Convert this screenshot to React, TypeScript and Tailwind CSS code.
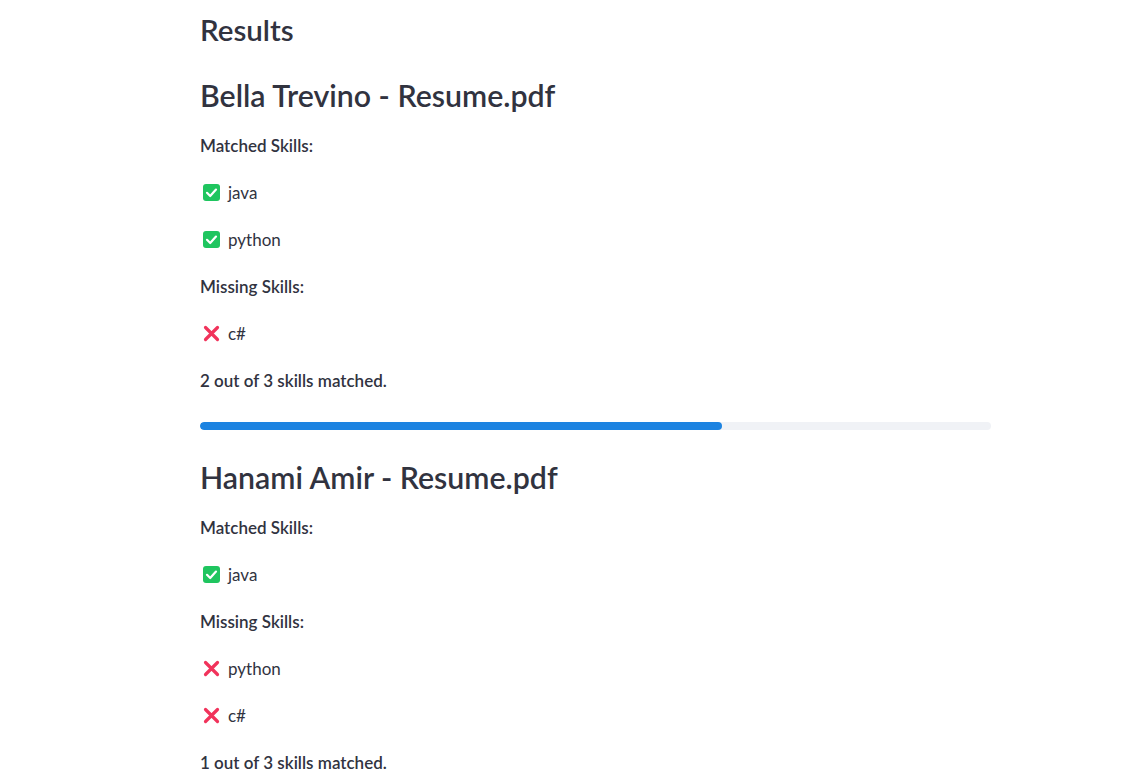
import React from 'react';

type Result = {
  name: string;
  matched: string[];
  missing: string[];
};

const results: Result[] = [
  { name: 'Bella Trevino - Resume.pdf', matched: ['java', 'python'], missing: ['c#'] },
  { name: 'Hanami Amir - Resume.pdf', matched: ['java'], missing: ['python', 'c#'] },
];

function CheckIcon() {
  return (
    <svg width="17" height="17" viewBox="0 0 17 17" className="shrink-0">
      <rect x="0" y="0" width="17" height="17" rx="3" fill="#1fc55f" />
      <path d="M4 8.8 L7.2 12 L13 5.6" stroke="#fff" strokeWidth="2.2" fill="none" strokeLinecap="round" strokeLinejoin="round" />
    </svg>
  );
}

function CrossIcon() {
  return (
    <svg width="17" height="17" viewBox="0 0 17 17" className="shrink-0">
      <path d="M2.5 2.5 L14.5 14.5 M14.5 2.5 L2.5 14.5" stroke="#f1335b" strokeWidth="3.2" strokeLinecap="round" />
    </svg>
  );
}

function Row({ children }: { children: React.ReactNode }) {
  return <div className="h-[47px] flex items-center">{children}</div>;
}

function Skill({ label, ok }: { label: string; ok: boolean }) {
  return (
    <Row>
      <div className="flex items-center gap-2 pl-[3px]">
        {ok ? <CheckIcon /> : <CrossIcon />}
        <span className="text-[17px]">{label}</span>
      </div>
    </Row>
  );
}

function ResultBlock({ r, showBar }: { r: Result; showBar: boolean }) {
  const total = r.matched.length + r.missing.length;
  const pct = Math.floor((r.matched.length / total) * 100);
  return (
    <div>
      <div className="h-[60px] pt-[8px] flex items-center">
        <h2 className="text-[30.3px] font-semibold">{r.name}</h2>
      </div>
      <Row>
        <p className="text-[17px] font-semibold">Matched Skills:</p>
      </Row>
      {r.matched.map((s) => (
        <Skill key={s} label={s} ok />
      ))}
      <Row>
        <p className="text-[17px] font-semibold">Missing Skills:</p>
      </Row>
      {r.missing.map((s) => (
        <Skill key={s} label={s} ok={false} />
      ))}
      <Row>
        <p className="text-[17px] font-semibold">
          {r.matched.length} out of {total} skills matched.
        </p>
      </Row>
      {showBar && (
        <div className="pt-[18px] pb-[14px]">
          <div className="w-full h-2 rounded-full bg-[#f0f2f6] overflow-hidden">
            <div className="h-full rounded-full bg-[#1c83e1]" style={{ width: `${pct}%` }} />
          </div>
        </div>
      )}
    </div>
  );
}

export default function App() {
  return (
    <div className="min-h-screen bg-white text-[#31333f] font-['Lato',sans-serif]">
      <div className="ml-[200px] w-[791px]">
        <div className="h-[62px] pb-[2px] flex items-center">
          <h1 className="text-[29.5px] font-semibold">Results</h1>
        </div>
        {results.map((r, i) => (
          <ResultBlock key={r.name} r={r} showBar={i === 0} />
        ))}
      </div>
    </div>
  );
}
